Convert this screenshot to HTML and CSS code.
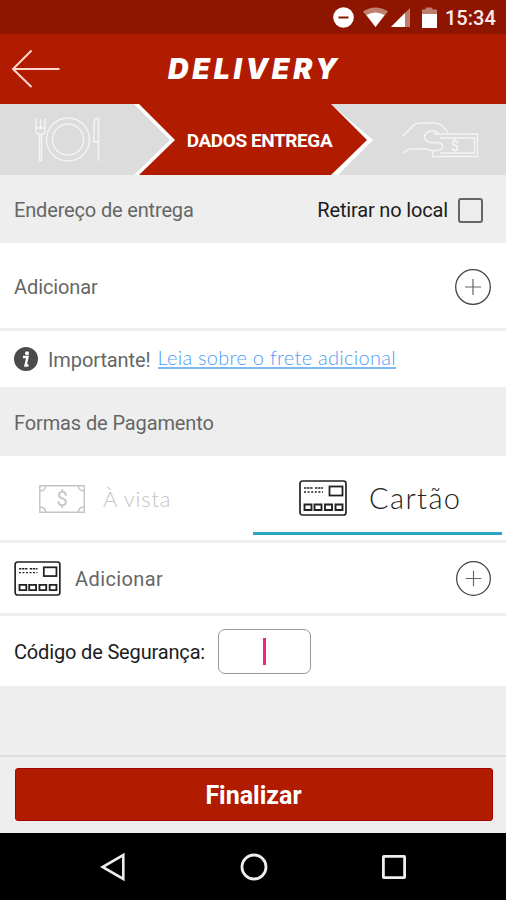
FILE: index.html
```html
<!DOCTYPE html>
<html lang="pt-BR">
<head>
<meta charset="utf-8">
<title>Delivery</title>
<link rel="stylesheet" href="styles.css">
</head>
<body>
<svg class="defs" width="0" height="0">
  <symbol id="card" viewBox="0 0 48 36">
    <rect x="1" y="1" width="46" height="34" rx="2.5" fill="none" stroke="currentColor" stroke-width="1.7"/>
    <rect x="30.500" y="6.500" width="13" height="9" fill="none" stroke="currentColor" stroke-width="1.8"/>
    <path d="M5 8h9M16 8h8" stroke="currentColor" stroke-width="1.4" stroke-dasharray="2.4 .7"/>
    <path d="M5 12h19" stroke="currentColor" stroke-width="1.4" stroke-dasharray="2 1.6"/>
    <path d="M5.500 24.500h7v5.500h-7zM15.500 24.500h7v5.500h-7zM26 24.500h7v5.500h-7zM36.500 24.500h7v5.500h-7z" fill="none" stroke="currentColor" stroke-width="1.9"/>
  </symbol>
  <symbol id="plus" viewBox="0 0 38 38">
    <circle cx="19" cy="19" r="17.300" fill="none" stroke="#444" stroke-width="1.300"/>
    <path d="M11 19h16M19 11v16" stroke="#666" stroke-width="1.200"/>
  </symbol>
</svg>
<div class="screen">
  <div class="status">
    <svg width="108" height="34" viewBox="0 0 108 34">
      <circle cx="10.500" cy="17.500" r="10.300" fill="#fff"/><path d="M5.500 17.500h10" stroke="#8e1500" stroke-width="2"/>
      <path d="M30 11.500q12.500-8 25 0L42.500 27z" fill="#c08070"/><path d="M33.500 15q9-5 18 0L42.500 27z" fill="#fff"/>
      <path d="M77 8v19H58z" fill="#bd7e70"/><path d="M72 13v14H58z" fill="#fff"/>
      <path d="M89 14V9.500h3.500V7.500h7v2h4.500V14z" fill="#bd7e70"/><path d="M89 14h15v14H89z" fill="#fff"/>
    </svg>
    <span class="clock">15:34</span>
  </div>
  <header class="header">
    <svg class="back" width="50" height="40" viewBox="0 0 50 40"><path d="M20.500 1.500L2 20l18.500 18M2 20h46.500" fill="none" stroke="#ffd5d0" stroke-width="2"/></svg>
    <h1>DELIVERY</h1>
  </header>
  <nav class="steps">
    <svg class="steps-bg" width="506" height="71" viewBox="0 0 506 71">
      <rect width="506" height="71" fill="#dcdcdc"/>
      <path d="M134 0H331L373 36 338 71H134L170 36z" fill="#fff"/>
      <path d="M139 0H331L367 36 331 71H139L175 36z" fill="#b11b00"/>
      <g fill="none" stroke="#f4f4f4" stroke-width="1.400">
        <path d="M36 14.500v12q0 4 4.500 4t4.500-4v-12M40.500 14.500v11M36 24h9M39.500 31v25.500h2V31"/>
        <circle cx="68" cy="35.500" r="21.500"/><circle cx="68" cy="35.500" r="15.500"/>
        <path d="M98.500 57V14.500h-2q-2.500 0-2.500 8v15.500h4.500"/>
        <path d="M402.500 32.500l10-10q3-3.500 8-3.500h15q7 .5 13 10.500M402.500 49.500q5-4.500 9-4.500h14l6 1.500h6.500q5-.5 4.500-4.500-.5-3-5-3.500h-8q-5-2-5-6 1-5 7-5.500 5-.5 7 2.500M434 30h43.500v22.500h-45v-5.500M440 34h34.500v15h-34"/>
      </g>
    </svg>
    <span class="dollar">$</span>
    <span class="step-title">DADOS ENTREGA</span>
  </nav>
  <section class="bar address-bar">
    <span class="t-address">Endereço de entrega</span>
    <label class="pickup"><span>Retirar no local</span><i class="box"></i></label>
  </section>
  <section class="row add-address"><span>Adicionar</span><svg width="38" height="38"><use href="#plus"/></svg></section>
  <section class="row notice">
    <svg width="24" height="24" viewBox="0 0 24 24"><circle cx="12" cy="12" r="12" fill="#4b4b4b"/><circle cx="13" cy="6.200" r="2" fill="#fff"/><path d="M9 10h4.500l-2 8.500h3" fill="none" stroke="#fff" stroke-width="2.400"/></svg>
    <span class="important">Importante!</span>
    <a href="#">Leia sobre o frete adicional</a>
  </section>
  <section class="bar pay-bar"><span>Formas de Pagamento</span></section>
  <section class="tabs">
    <div class="tab cash">
      <svg width="46" height="28" viewBox="0 0 46 28"><path d="M.8.800h44.400v26.400H.8zM.8 6q5.500 0 6-5M39.200 1q.5 5 6 5M.8 22q5.500 0 6 5M39.200 27q.5-5 6-5" fill="none" stroke="#c4c4c4" stroke-width="1.400"/><text x="23" y="20.500" text-anchor="middle" class="bill">$</text></svg>
      <span>À vista</span>
    </div>
    <div class="tab card"><svg width="48" height="36"><use href="#card"/></svg><span>Cartão</span></div>
  </section>
  <section class="row add-card"><svg width="47" height="35"><use href="#card"/></svg><span>Adicionar</span><svg class="end" width="37" height="37"><use href="#plus"/></svg></section>
  <section class="row code"><span>Código de Segurança:</span><div class="field"><i></i></div></section>
  <div class="space"></div>
  <footer class="footer"><button>Finalizar</button></footer>
  <div class="navbar">
    <svg width="26" height="28" viewBox="0 0 26 28"><path d="M23.300 2v24L2.500 14z" fill="none" stroke="#eee" stroke-width="2.600"/></svg>
    <svg width="28" height="28" viewBox="0 0 28 28"><circle cx="14" cy="14" r="12" fill="none" stroke="#eee" stroke-width="2.800"/></svg>
    <svg width="24" height="24" viewBox="0 0 24 24"><rect x="1.400" y="1.400" width="21.200" height="21.200" rx=".5" fill="none" stroke="#eee" stroke-width="2.800"/></svg>
  </div>
</div>
</body>
</html>
```
FILE: styles.css
```css
* { box-sizing: border-box; }
body { margin: 0; font: 20px/24px Roboto, sans-serif; color: #666; background: #eee; }
svg { display: block; flex: none; }
span, a { white-space: nowrap; }
.defs { position: absolute; }
.screen { width: 506px; height: 900px; display: flex; flex-direction: column; overflow: hidden; }
.screen > * { flex: none; }
.status { height: 34px; background: #8e1500; display: flex; align-items: center; padding-left: 333px; }
.clock { color: #f8eceb; font-size: 20px; font-weight: 500; margin-left: 4px; padding-top: 2px; }
.header { height: 70px; background: #b11b00; display: grid; grid-template-columns: 157px 1fr 157px; align-items: center; padding-left: 11px; }
.header h1 { margin: 0; font: italic 900 28.500px/40px Inter, sans-serif; letter-spacing: 3.700px; color: #fff; }
.steps { height: 71px; position: relative; display: flex; align-items: center; justify-content: center; }
.steps-bg { position: absolute; inset: 0; }
.step-title { position: relative; color: #fff; font-weight: 700; font-size: 19px; letter-spacing: -.42px; padding-left: 13px; padding-top: 2px; }
.dollar { position: absolute; left: 451px; top: 30px; color: #f8f8f8; font-size: 14px; }
.bar { background: #eee; display: flex; align-items: center; padding: 0 14px; letter-spacing: -.12px; }
.address-bar { height: 68px; justify-content: space-between; padding-top: 2px; }
.t-address { letter-spacing: -.16px; }
.pickup { display: flex; align-items: center; gap: 10px; color: #1c1c1c; padding-right: 9px; letter-spacing: -.16px; }
.box { width: 25px; height: 25px; border: 2px solid #666; border-radius: 3px; }
.row { background: #fff; display: flex; align-items: center; padding: 0 14px; border-bottom: 3px solid #eee; }
.add-address { height: 88px; justify-content: space-between; padding-top: 3px; letter-spacing: -.1px; }
.notice { height: 56px; border: 0; }
.important { margin-left: 10px; letter-spacing: -.1px; padding-top: 2px; }
.notice a { margin-left: 7px; font: 300 20px/20px Lato, sans-serif; letter-spacing: .28px; color: #4d9df5; border-bottom: 2px solid #7db8f5; text-decoration: none; margin-bottom: 2px; }
.pay-bar { height: 69px; padding-top: 2px; }
.tabs { height: 87px; background: #fff; border-bottom: 3px solid #eee; display: grid; grid-template-columns: 253px 249px; }
.tab { height: 79px; display: flex; align-items: center; padding-top: 6px; font-family: Lato, sans-serif; font-weight: 300; }
.cash { padding-left: 39px; gap: 18px; color: #c4c4c4; font-size: 22px; letter-spacing: .8px; }
.bill { font: 20px Roboto, sans-serif; letter-spacing: 0; fill: #c4c4c4; }
.card { padding-left: 46px; padding-top: 8px; gap: 22px; color: #222; font-size: 29px; letter-spacing: 1.400px; border-bottom: 3px solid #2da5c4; }
.add-card { height: 73px; }
.add-card > svg:first-child { color: #222; }
.add-card span { margin-left: 14px; letter-spacing: .4px; padding-top: 2px; }
.end { margin-left: auto; }
.code { height: 70px; border: 0; color: #1c1c1c; }
.code span { letter-spacing: -.16px; padding-top: 2px; }
.field { width: 93px; height: 45px; margin-left: 13px; border: 1.500px solid #999; border-radius: 7px; display: flex; align-items: center; justify-content: center; }
.field i { width: 3px; height: 27px; background: #f0247c; }
.space { height: 71px; border-bottom: 2px solid #ddd; }
.footer { height: 76px; padding: 11px 13.500px 12px 14.500px; }
.footer button { width: 100%; height: 53px; border: 1px solid #a80500; border-radius: 3px; background: #b11b00; color: #fff; font: 700 25px/53px Roboto, sans-serif; padding: 0; }
.navbar { flex: 1; background: #000; display: flex; align-items: center; justify-content: space-between; padding: 0 100px 0 100px; }
```
